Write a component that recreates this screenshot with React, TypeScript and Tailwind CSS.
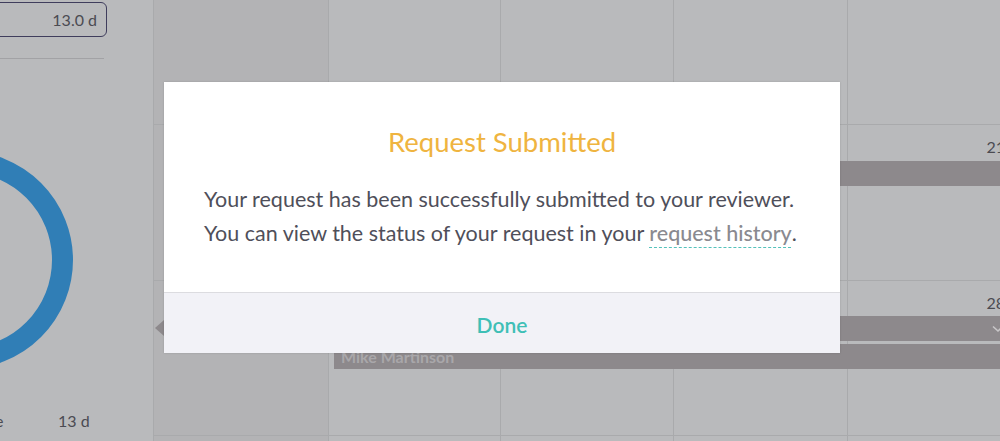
import React from 'react';

const font = { fontFamily: 'Lato, "Open Sans", sans-serif' };

const weeks = [
  { h: 'h-[125px]', date: 14 },
  { h: 'h-[156px]', date: 21 },
  { h: 'h-[155px]', date: 28 },
  { h: 'h-[160px]', date: 4 },
];

const widths = ['w-[175px]', 'w-[172px]', 'w-[173px]', 'w-[174px]', 'w-[174px]'];

function Sidebar() {
  return (
    <div className="flex h-full w-[154px] shrink-0 flex-col border-r border-[#a9aaac] bg-[#b9babc]">
      {/* balance box */}
      <div className="mt-[2px] -ml-[14px] flex h-[35px] w-[121px] items-center justify-end rounded-[6px] border border-[#3f3d5c] pr-[9px] text-[16px] text-[#4b4b52]">
        13.0 d
      </div>
      <div className="mt-[21px] w-[104px] border-t border-[#a2a2a5]" />
      {/* donut */}
      <svg width="153" height="350" className="shrink-0">
        <circle cx="-36" cy="201" r="98.5" fill="none" stroke="#307eb6" strokeWidth="21" />
      </svg>
      <div className="flex h-[24px] items-center text-[16px] leading-[24px] text-[#4b4b52]">
        <span className="-ml-[5px] w-[63px]">e</span>
        <span>13 d</span>
      </div>
    </div>
  );
}

function Calendar() {
  return (
    <div className="flex shrink-0 flex-col">
      {weeks.map((w, wi) => (
        <div key={wi} className={`relative flex ${w.h} shrink-0 border-b border-[#a9aaac]`}>
          {widths.map((cw, ci) => (
            <div
              key={ci}
              className={`${cw} shrink-0 border-r border-[#a9aaac] ${ci === 0 ? 'bg-[#b3b3b5]' : 'bg-[#b9babc]'}`}
            >
              {wi > 0 && wi < 3 && ci === 4 && (
                <div className="pt-[10px] pr-[16px] text-right text-[16px] leading-[24px] text-[#4b4b52]">{w.date}</div>
              )}
            </div>
          ))}
          {wi === 1 && (
            <div className="absolute top-[36px] left-[180px] h-[25px] w-[688px] bg-[#8d898c]" />
          )}
          {wi === 2 && (
            <>
              <div className="absolute top-[39px] left-[1px] h-0 w-0 border-y-[8px] border-r-[9px] border-y-transparent border-r-[#8d898c]" />
              <div className="absolute top-[35px] left-[10px] flex h-[25px] w-[853px] items-center justify-end bg-[#8d898c] pr-[13px]">
                <svg width="12" height="8" viewBox="0 0 12 8">
                  <path d="M1 1.5 L6 6 L11 1.5" fill="none" stroke="#c9c7c9" strokeWidth="1.6" />
                </svg>
              </div>
              <div className="absolute top-[63px] left-[180px] flex h-[25px] w-[683px] items-center bg-[#8d898c] pl-[7px] text-[16px] font-bold text-[#a9a7aa]">
                Mike Martinson
              </div>
            </>
          )}
        </div>
      ))}
    </div>
  );
}

function Modal() {
  return (
    <div className="absolute top-[82px] left-[164px] w-[676px] bg-white shadow-[0_0_2px_rgba(0,0,0,0.15)]">
      <div className="px-10 pt-[43px] pb-[42px]">
        <h2 className="text-center text-[27.5px] leading-[34px] font-normal text-[#efb440]">Request Submitted</h2>
        <div className="mt-[23px] text-[21.5px] leading-[34px] text-[#4f4f5a]">
          <p>Your request has been successfully submitted to your reviewer.</p>
          <p>
            You can view the status of your request in your{' '}
            <span className="font-medium text-[#8a8a90] underline decoration-[#54c2bb] decoration-dashed decoration-1 underline-offset-[6px]">
              request history
            </span>
            .
          </p>
        </div>
      </div>
      <div className="flex h-[61px] items-center justify-center border-t border-[#dcdce0] bg-[#f2f2f7] pt-[3px]">
        <span className="text-[21px] font-semibold text-[#3fbfb6]">Done</span>
      </div>
    </div>
  );
}

export default function App() {
  return (
    <div className="relative flex h-[441px] w-[1000px] overflow-hidden bg-[#b9babc]" style={font}>
      <Sidebar />
      <Calendar />
      <Modal />
    </div>
  );
}
